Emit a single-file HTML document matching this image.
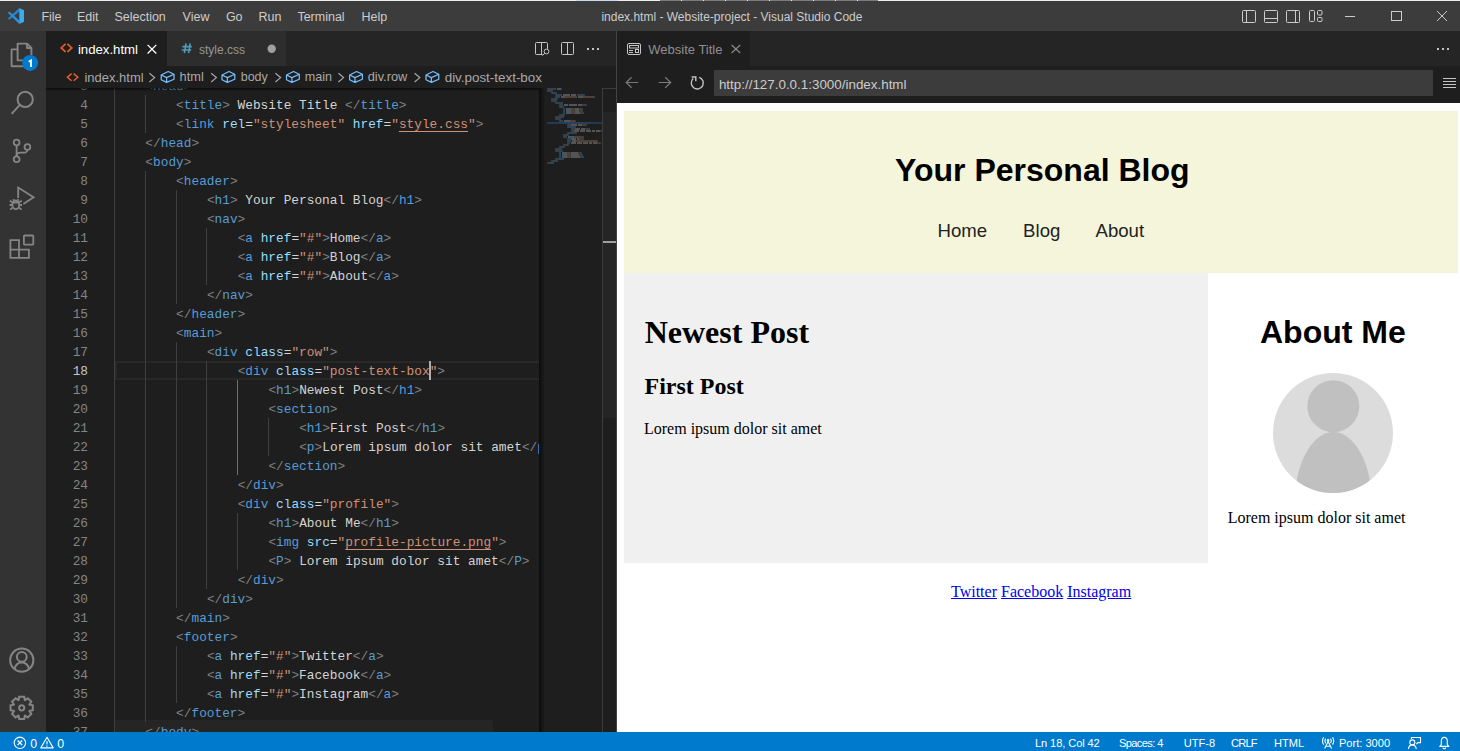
<!DOCTYPE html>
<html><head><meta charset="utf-8">
<style>
*{margin:0;padding:0;box-sizing:border-box}
html,body{width:1460px;height:751px;overflow:hidden;background:#1e1e1e}
body{position:relative;font-family:"Liberation Sans",sans-serif;color:#ccc}
.abs{position:absolute}
.t{position:absolute;white-space:pre;line-height:1}
#topline{left:0;top:0;width:1460px;height:1px;background:#eeeeee}
#title{left:0;top:1px;width:1460px;height:30px;background:#3c3c3c}
#act{left:0;top:31px;width:46px;height:701px;background:#333333}
#tabs1{left:46px;top:31px;width:570px;height:35px;background:#252526}
#tab1{left:46px;top:31px;width:121px;height:35px;background:#1e1e1e}
#tab2{left:167px;top:31px;width:119px;height:35px;background:#2d2d2d}
#bc{left:46px;top:66px;width:570px;height:22px;background:#1e1e1e}
#ed{left:46px;top:88px;width:570px;height:644px;background:#1e1e1e;overflow:hidden}
#bcshadow{left:46px;top:88px;width:493px;height:3px;background:linear-gradient(#0009,#0000)}
.ln{position:absolute;height:19px;line-height:19px;white-space:pre;font-family:"Liberation Mono",monospace;font-size:12.8px;color:#d4d4d4}
.num{position:absolute;left:0;width:42px;text-align:right;height:19px;line-height:19px;font-family:"Liberation Mono",monospace;font-size:12.8px;color:#858585}
.num.act{color:#c6c6c6}
.g{position:absolute;width:1px;height:19px;background:#404040}
.g.ga{background:#707070}
.b{color:#808080}.n{color:#569cd6}.a{color:#9cdcfe}.s{color:#ce9178}.u{color:#ce9178;text-decoration:underline;text-underline-offset:3px;text-decoration-skip-ink:none}.x{color:#d4d4d4}
#codeclip{position:absolute;left:0;top:0;width:493px;height:644px;overflow:hidden}
#curline{position:absolute;left:69px;top:273px;width:430px;height:19px;border:2px solid #282828}
#cursor{position:absolute;left:383px;top:273px;width:2px;height:19px;background:#aeafad}
#hscroll{position:absolute;left:69px;top:632px;width:378px;height:12px;background:#252525}
#minishadow{position:absolute;left:493px;top:0;width:6px;height:644px;background:linear-gradient(90deg,#0009,#0000)}
#vsb{position:absolute;left:556px;top:0;width:15px;height:644px;border-left:1px solid #3c3c3c;border-top:1px solid #3c3c3c}
#vslider{position:absolute;left:557px;top:24px;width:13px;height:306px;background:#252525}
#vcur{position:absolute;left:557px;top:153px;width:13px;height:2px;background:#a0a0a0}
#sep{left:616px;top:31px;width:1px;height:701px;background:#444}
#r2tabs{left:617px;top:31px;width:843px;height:35px;background:#252526}
#r2tab{left:617px;top:31px;width:133px;height:35px;background:#1e1e1e}
#r2bar{left:617px;top:66px;width:843px;height:37px;background:#1e1e1e}
#url{left:714px;top:70px;width:719px;height:26px;background:#3c3c3c}
#web{left:617px;top:103px;width:843px;height:629px;background:#fff;overflow:hidden}
#hdr{left:624px;top:111px;width:834px;height:162px;background:#f5f5dc}
#post{left:624px;top:273px;width:584px;height:290px;background:#f0f0f0}
#status{left:0;top:732px;width:1460px;height:19px;background:#007acc}
.st{font-size:11.1px;color:#fff}
.ser{font-family:"Liberation Serif",serif;color:#000}
</style></head><body>
<div id="topline" class="abs"></div>
<div class="abs" style="left:576px;top:0;width:42px;height:1px;background:#c6d9ee"></div>
<div class="abs" style="left:660px;top:0;width:21px;height:1px;background:#7c7c7c"></div>
<div class="abs" style="left:682px;top:0;width:21px;height:1px;background:#7c7c7c"></div>
<div class="abs" style="left:704px;top:0;width:21px;height:1px;background:#7c7c7c"></div>
<div class="abs" style="left:726px;top:0;width:21px;height:1px;background:#7c7c7c"></div>
<div class="abs" style="left:748px;top:0;width:21px;height:1px;background:#7c7c7c"></div>
<div class="abs" style="left:770px;top:0;width:21px;height:1px;background:#7c7c7c"></div>
<div class="abs" style="left:792px;top:0;width:21px;height:1px;background:#7c7c7c"></div>
<div class="abs" style="left:814px;top:0;width:21px;height:1px;background:#7c7c7c"></div>
<div class="abs" style="left:836px;top:0;width:21px;height:1px;background:#7c7c7c"></div>
<div class="abs" style="left:858px;top:0;width:20px;height:1px;background:#7c7c7c"></div>
<div id="title" class="abs"></div>
<div id="act" class="abs"></div>
<div id="tabs1" class="abs"></div>
<div id="tab1" class="abs"></div>
<div id="tab2" class="abs"></div>
<div id="bc" class="abs"></div>
<div id="ed" class="abs">
<div class="num" style="top:-11.5px">3</div>
<div class="num" style="top:7.5px">4</div>
<div class="num" style="top:26.5px">5</div>
<div class="num" style="top:45.5px">6</div>
<div class="num" style="top:64.5px">7</div>
<div class="num" style="top:83.5px">8</div>
<div class="num" style="top:102.5px">9</div>
<div class="num" style="top:121.5px">10</div>
<div class="num" style="top:140.5px">11</div>
<div class="num" style="top:159.5px">12</div>
<div class="num" style="top:178.5px">13</div>
<div class="num" style="top:197.5px">14</div>
<div class="num" style="top:216.5px">15</div>
<div class="num" style="top:235.5px">16</div>
<div class="num" style="top:254.5px">17</div>
<div class="num act" style="top:273.5px">18</div>
<div class="num" style="top:292.5px">19</div>
<div class="num" style="top:311.5px">20</div>
<div class="num" style="top:330.5px">21</div>
<div class="num" style="top:349.5px">22</div>
<div class="num" style="top:368.5px">23</div>
<div class="num" style="top:387.5px">24</div>
<div class="num" style="top:406.5px">25</div>
<div class="num" style="top:425.5px">26</div>
<div class="num" style="top:444.5px">27</div>
<div class="num" style="top:463.5px">28</div>
<div class="num" style="top:482.5px">29</div>
<div class="num" style="top:501.5px">30</div>
<div class="num" style="top:520.5px">31</div>
<div class="num" style="top:539.5px">32</div>
<div class="num" style="top:558.5px">33</div>
<div class="num" style="top:577.5px">34</div>
<div class="num" style="top:596.5px">35</div>
<div class="num" style="top:615.5px">36</div>
<div class="num" style="top:634.5px">37</div>
<div id="codeclip">
<div id="hscroll"></div>
<div id="curline"></div>
<div class="g" style="top:-12px;left:68px"></div>
<div class="g" style="top:7px;left:68px"></div>
<div class="g" style="top:7px;left:99px"></div>
<div class="g" style="top:26px;left:68px"></div>
<div class="g" style="top:26px;left:99px"></div>
<div class="g" style="top:45px;left:68px"></div>
<div class="g" style="top:64px;left:68px"></div>
<div class="g" style="top:83px;left:68px"></div>
<div class="g" style="top:83px;left:99px"></div>
<div class="g" style="top:102px;left:68px"></div>
<div class="g" style="top:102px;left:99px"></div>
<div class="g" style="top:102px;left:130px"></div>
<div class="g" style="top:121px;left:68px"></div>
<div class="g" style="top:121px;left:99px"></div>
<div class="g" style="top:121px;left:130px"></div>
<div class="g" style="top:140px;left:68px"></div>
<div class="g" style="top:140px;left:99px"></div>
<div class="g" style="top:140px;left:130px"></div>
<div class="g" style="top:140px;left:160px"></div>
<div class="g" style="top:159px;left:68px"></div>
<div class="g" style="top:159px;left:99px"></div>
<div class="g" style="top:159px;left:130px"></div>
<div class="g" style="top:159px;left:160px"></div>
<div class="g" style="top:178px;left:68px"></div>
<div class="g" style="top:178px;left:99px"></div>
<div class="g" style="top:178px;left:130px"></div>
<div class="g" style="top:178px;left:160px"></div>
<div class="g" style="top:197px;left:68px"></div>
<div class="g" style="top:197px;left:99px"></div>
<div class="g" style="top:197px;left:130px"></div>
<div class="g" style="top:216px;left:68px"></div>
<div class="g" style="top:216px;left:99px"></div>
<div class="g" style="top:235px;left:68px"></div>
<div class="g" style="top:235px;left:99px"></div>
<div class="g" style="top:254px;left:68px"></div>
<div class="g" style="top:254px;left:99px"></div>
<div class="g" style="top:254px;left:130px"></div>
<div class="g" style="top:273px;left:68px"></div>
<div class="g" style="top:273px;left:99px"></div>
<div class="g" style="top:273px;left:130px"></div>
<div class="g" style="top:273px;left:160px"></div>
<div class="g" style="top:292px;left:68px"></div>
<div class="g" style="top:292px;left:99px"></div>
<div class="g" style="top:292px;left:130px"></div>
<div class="g" style="top:292px;left:160px"></div>
<div class="g ga" style="top:292px;left:191px"></div>
<div class="g" style="top:311px;left:68px"></div>
<div class="g" style="top:311px;left:99px"></div>
<div class="g" style="top:311px;left:130px"></div>
<div class="g" style="top:311px;left:160px"></div>
<div class="g ga" style="top:311px;left:191px"></div>
<div class="g" style="top:330px;left:68px"></div>
<div class="g" style="top:330px;left:99px"></div>
<div class="g" style="top:330px;left:130px"></div>
<div class="g" style="top:330px;left:160px"></div>
<div class="g ga" style="top:330px;left:191px"></div>
<div class="g" style="top:330px;left:222px"></div>
<div class="g" style="top:349px;left:68px"></div>
<div class="g" style="top:349px;left:99px"></div>
<div class="g" style="top:349px;left:130px"></div>
<div class="g" style="top:349px;left:160px"></div>
<div class="g ga" style="top:349px;left:191px"></div>
<div class="g" style="top:349px;left:222px"></div>
<div class="g" style="top:368px;left:68px"></div>
<div class="g" style="top:368px;left:99px"></div>
<div class="g" style="top:368px;left:130px"></div>
<div class="g" style="top:368px;left:160px"></div>
<div class="g ga" style="top:368px;left:191px"></div>
<div class="g" style="top:387px;left:68px"></div>
<div class="g" style="top:387px;left:99px"></div>
<div class="g" style="top:387px;left:130px"></div>
<div class="g" style="top:387px;left:160px"></div>
<div class="g" style="top:406px;left:68px"></div>
<div class="g" style="top:406px;left:99px"></div>
<div class="g" style="top:406px;left:130px"></div>
<div class="g" style="top:406px;left:160px"></div>
<div class="g" style="top:425px;left:68px"></div>
<div class="g" style="top:425px;left:99px"></div>
<div class="g" style="top:425px;left:130px"></div>
<div class="g" style="top:425px;left:160px"></div>
<div class="g" style="top:425px;left:191px"></div>
<div class="g" style="top:444px;left:68px"></div>
<div class="g" style="top:444px;left:99px"></div>
<div class="g" style="top:444px;left:130px"></div>
<div class="g" style="top:444px;left:160px"></div>
<div class="g" style="top:444px;left:191px"></div>
<div class="g" style="top:463px;left:68px"></div>
<div class="g" style="top:463px;left:99px"></div>
<div class="g" style="top:463px;left:130px"></div>
<div class="g" style="top:463px;left:160px"></div>
<div class="g" style="top:463px;left:191px"></div>
<div class="g" style="top:482px;left:68px"></div>
<div class="g" style="top:482px;left:99px"></div>
<div class="g" style="top:482px;left:130px"></div>
<div class="g" style="top:482px;left:160px"></div>
<div class="g" style="top:501px;left:68px"></div>
<div class="g" style="top:501px;left:99px"></div>
<div class="g" style="top:501px;left:130px"></div>
<div class="g" style="top:520px;left:68px"></div>
<div class="g" style="top:520px;left:99px"></div>
<div class="g" style="top:539px;left:68px"></div>
<div class="g" style="top:539px;left:99px"></div>
<div class="g" style="top:558px;left:68px"></div>
<div class="g" style="top:558px;left:99px"></div>
<div class="g" style="top:558px;left:130px"></div>
<div class="g" style="top:577px;left:68px"></div>
<div class="g" style="top:577px;left:99px"></div>
<div class="g" style="top:577px;left:130px"></div>
<div class="g" style="top:596px;left:68px"></div>
<div class="g" style="top:596px;left:99px"></div>
<div class="g" style="top:596px;left:130px"></div>
<div class="g" style="top:615px;left:68px"></div>
<div class="g" style="top:615px;left:99px"></div>
<div class="g" style="top:634px;left:68px"></div>
<div class="ln" style="top:-11.5px;left:99.36px"><span class="b">&lt;</span><span class="n">head</span><span class="b">&gt;</span></div>
<div class="ln" style="top:7.5px;left:130.12px"><span class="b">&lt;</span><span class="n">title</span><span class="b">&gt;</span><span class="x"> Website Title </span><span class="b">&lt;/</span><span class="n">title</span><span class="b">&gt;</span></div>
<div class="ln" style="top:26.5px;left:130.12px"><span class="b">&lt;</span><span class="n">link</span><span class="x"> </span><span class="a">rel</span><span class="x">=</span><span class="s">&quot;stylesheet&quot;</span><span class="x"> </span><span class="a">href</span><span class="x">=</span><span class="s">&quot;</span><span class="u">style.css</span><span class="s">&quot;</span><span class="b">&gt;</span></div>
<div class="ln" style="top:45.5px;left:99.36px"><span class="b">&lt;/</span><span class="n">head</span><span class="b">&gt;</span></div>
<div class="ln" style="top:64.5px;left:99.36px"><span class="b">&lt;</span><span class="n">body</span><span class="b">&gt;</span></div>
<div class="ln" style="top:83.5px;left:130.12px"><span class="b">&lt;</span><span class="n">header</span><span class="b">&gt;</span></div>
<div class="ln" style="top:102.5px;left:160.88px"><span class="b">&lt;</span><span class="n">h1</span><span class="b">&gt;</span><span class="x"> Your Personal Blog</span><span class="b">&lt;/</span><span class="n">h1</span><span class="b">&gt;</span></div>
<div class="ln" style="top:121.5px;left:160.88px"><span class="b">&lt;</span><span class="n">nav</span><span class="b">&gt;</span></div>
<div class="ln" style="top:140.5px;left:191.64px"><span class="b">&lt;</span><span class="n">a</span><span class="x"> </span><span class="a">href</span><span class="x">=</span><span class="s">&quot;#&quot;</span><span class="b">&gt;</span><span class="x">Home</span><span class="b">&lt;/</span><span class="n">a</span><span class="b">&gt;</span></div>
<div class="ln" style="top:159.5px;left:191.64px"><span class="b">&lt;</span><span class="n">a</span><span class="x"> </span><span class="a">href</span><span class="x">=</span><span class="s">&quot;#&quot;</span><span class="b">&gt;</span><span class="x">Blog</span><span class="b">&lt;/</span><span class="n">a</span><span class="b">&gt;</span></div>
<div class="ln" style="top:178.5px;left:191.64px"><span class="b">&lt;</span><span class="n">a</span><span class="x"> </span><span class="a">href</span><span class="x">=</span><span class="s">&quot;#&quot;</span><span class="b">&gt;</span><span class="x">About</span><span class="b">&lt;/</span><span class="n">a</span><span class="b">&gt;</span></div>
<div class="ln" style="top:197.5px;left:160.88px"><span class="b">&lt;/</span><span class="n">nav</span><span class="b">&gt;</span></div>
<div class="ln" style="top:216.5px;left:130.12px"><span class="b">&lt;/</span><span class="n">header</span><span class="b">&gt;</span></div>
<div class="ln" style="top:235.5px;left:130.12px"><span class="b">&lt;</span><span class="n">main</span><span class="b">&gt;</span></div>
<div class="ln" style="top:254.5px;left:160.88px"><span class="b">&lt;</span><span class="n">div</span><span class="x"> </span><span class="a">class</span><span class="x">=</span><span class="s">&quot;row&quot;</span><span class="b">&gt;</span></div>
<div class="ln" style="top:273.5px;left:191.64px"><span class="b">&lt;</span><span class="n">div</span><span class="x"> </span><span class="a">class</span><span class="x">=</span><span class="s">&quot;post-text-box&quot;</span><span class="b">&gt;</span></div>
<div class="ln" style="top:292.5px;left:222.40px"><span class="b">&lt;</span><span class="n">h1</span><span class="b">&gt;</span><span class="x">Newest Post</span><span class="b">&lt;/</span><span class="n">h1</span><span class="b">&gt;</span></div>
<div class="ln" style="top:311.5px;left:222.40px"><span class="b">&lt;</span><span class="n">section</span><span class="b">&gt;</span></div>
<div class="ln" style="top:330.5px;left:253.16px"><span class="b">&lt;</span><span class="n">h1</span><span class="b">&gt;</span><span class="x">First Post</span><span class="b">&lt;/</span><span class="n">h1</span><span class="b">&gt;</span></div>
<div class="ln" style="top:349.5px;left:253.16px"><span class="b">&lt;</span><span class="n">p</span><span class="b">&gt;</span><span class="x">Lorem ipsum dolor sit amet</span><span class="b">&lt;/</span><span class="n">p</span><span class="b">&gt;</span></div>
<div class="ln" style="top:368.5px;left:222.40px"><span class="b">&lt;/</span><span class="n">section</span><span class="b">&gt;</span></div>
<div class="ln" style="top:387.5px;left:191.64px"><span class="b">&lt;/</span><span class="n">div</span><span class="b">&gt;</span></div>
<div class="ln" style="top:406.5px;left:191.64px"><span class="b">&lt;</span><span class="n">div</span><span class="x"> </span><span class="a">class</span><span class="x">=</span><span class="s">&quot;profile&quot;</span><span class="b">&gt;</span></div>
<div class="ln" style="top:425.5px;left:222.40px"><span class="b">&lt;</span><span class="n">h1</span><span class="b">&gt;</span><span class="x">About Me</span><span class="b">&lt;/</span><span class="n">h1</span><span class="b">&gt;</span></div>
<div class="ln" style="top:444.5px;left:222.40px"><span class="b">&lt;</span><span class="n">img</span><span class="x"> </span><span class="a">src</span><span class="x">=</span><span class="s">&quot;</span><span class="u">profile-picture.png</span><span class="s">&quot;</span><span class="b">&gt;</span></div>
<div class="ln" style="top:463.5px;left:222.40px"><span class="b">&lt;</span><span class="n">P</span><span class="b">&gt;</span><span class="x"> Lorem ipsum dolor sit amet</span><span class="b">&lt;/</span><span class="n">P</span><span class="b">&gt;</span></div>
<div class="ln" style="top:482.5px;left:191.64px"><span class="b">&lt;/</span><span class="n">div</span><span class="b">&gt;</span></div>
<div class="ln" style="top:501.5px;left:160.88px"><span class="b">&lt;/</span><span class="n">div</span><span class="b">&gt;</span></div>
<div class="ln" style="top:520.5px;left:130.12px"><span class="b">&lt;/</span><span class="n">main</span><span class="b">&gt;</span></div>
<div class="ln" style="top:539.5px;left:130.12px"><span class="b">&lt;</span><span class="n">footer</span><span class="b">&gt;</span></div>
<div class="ln" style="top:558.5px;left:160.88px"><span class="b">&lt;</span><span class="n">a</span><span class="x"> </span><span class="a">href</span><span class="x">=</span><span class="s">&quot;#&quot;</span><span class="b">&gt;</span><span class="x">Twitter</span><span class="b">&lt;/</span><span class="n">a</span><span class="b">&gt;</span></div>
<div class="ln" style="top:577.5px;left:160.88px"><span class="b">&lt;</span><span class="n">a</span><span class="x"> </span><span class="a">href</span><span class="x">=</span><span class="s">&quot;#&quot;</span><span class="b">&gt;</span><span class="x">Facebook</span><span class="b">&lt;/</span><span class="n">a</span><span class="b">&gt;</span></div>
<div class="ln" style="top:596.5px;left:160.88px"><span class="b">&lt;</span><span class="n">a</span><span class="x"> </span><span class="a">href</span><span class="x">=</span><span class="s">&quot;#&quot;</span><span class="b">&gt;</span><span class="x">Instagram</span><span class="b">&lt;/</span><span class="n">a</span><span class="b">&gt;</span></div>
<div class="ln" style="top:615.5px;left:130.12px"><span class="b">&lt;/</span><span class="n">footer</span><span class="b">&gt;</span></div>
<div class="ln" style="top:634.5px;left:99.36px"><span class="b">&lt;/</span><span class="n">body</span><span class="b">&gt;</span></div>
<div id="cursor"></div>
</div>
<div id="minishadow"></div>
<div style="position:absolute;left:501px;top:0px;width:2px;height:2px;background:#808080;opacity:.3"></div>
<div style="position:absolute;left:503px;top:0px;width:7px;height:2px;background:#569cd6;opacity:.3"></div>
<div style="position:absolute;left:511px;top:0px;width:4px;height:2px;background:#9cdcfe;opacity:.3"></div>
<div style="position:absolute;left:515px;top:0px;width:1px;height:2px;background:#808080;opacity:.3"></div>
<div style="position:absolute;left:501px;top:2px;width:1px;height:2px;background:#808080;opacity:.3"></div>
<div style="position:absolute;left:502px;top:2px;width:4px;height:2px;background:#569cd6;opacity:.3"></div>
<div style="position:absolute;left:506px;top:2px;width:1px;height:2px;background:#808080;opacity:.3"></div>
<div style="position:absolute;left:505px;top:4px;width:1px;height:2px;background:#808080;opacity:.3"></div>
<div style="position:absolute;left:506px;top:4px;width:4px;height:2px;background:#569cd6;opacity:.3"></div>
<div style="position:absolute;left:510px;top:4px;width:1px;height:2px;background:#808080;opacity:.3"></div>
<div style="position:absolute;left:509px;top:6px;width:1px;height:2px;background:#808080;opacity:.3"></div>
<div style="position:absolute;left:510px;top:6px;width:5px;height:2px;background:#569cd6;opacity:.3"></div>
<div style="position:absolute;left:515px;top:6px;width:1px;height:2px;background:#808080;opacity:.3"></div>
<div style="position:absolute;left:517px;top:6px;width:7px;height:2px;background:#d4d4d4;opacity:.3"></div>
<div style="position:absolute;left:525px;top:6px;width:5px;height:2px;background:#d4d4d4;opacity:.3"></div>
<div style="position:absolute;left:531px;top:6px;width:2px;height:2px;background:#808080;opacity:.3"></div>
<div style="position:absolute;left:533px;top:6px;width:5px;height:2px;background:#569cd6;opacity:.3"></div>
<div style="position:absolute;left:538px;top:6px;width:1px;height:2px;background:#808080;opacity:.3"></div>
<div style="position:absolute;left:509px;top:8px;width:1px;height:2px;background:#808080;opacity:.3"></div>
<div style="position:absolute;left:510px;top:8px;width:4px;height:2px;background:#569cd6;opacity:.3"></div>
<div style="position:absolute;left:515px;top:8px;width:3px;height:2px;background:#9cdcfe;opacity:.3"></div>
<div style="position:absolute;left:518px;top:8px;width:1px;height:2px;background:#d4d4d4;opacity:.3"></div>
<div style="position:absolute;left:519px;top:8px;width:12px;height:2px;background:#ce9178;opacity:.3"></div>
<div style="position:absolute;left:532px;top:8px;width:4px;height:2px;background:#9cdcfe;opacity:.3"></div>
<div style="position:absolute;left:536px;top:8px;width:1px;height:2px;background:#d4d4d4;opacity:.3"></div>
<div style="position:absolute;left:537px;top:8px;width:1px;height:2px;background:#ce9178;opacity:.3"></div>
<div style="position:absolute;left:538px;top:8px;width:9px;height:2px;background:#ce9178;opacity:.3"></div>
<div style="position:absolute;left:547px;top:8px;width:1px;height:2px;background:#ce9178;opacity:.3"></div>
<div style="position:absolute;left:548px;top:8px;width:1px;height:2px;background:#808080;opacity:.3"></div>
<div style="position:absolute;left:505px;top:10px;width:2px;height:2px;background:#808080;opacity:.3"></div>
<div style="position:absolute;left:507px;top:10px;width:4px;height:2px;background:#569cd6;opacity:.3"></div>
<div style="position:absolute;left:511px;top:10px;width:1px;height:2px;background:#808080;opacity:.3"></div>
<div style="position:absolute;left:505px;top:12px;width:1px;height:2px;background:#808080;opacity:.3"></div>
<div style="position:absolute;left:506px;top:12px;width:4px;height:2px;background:#569cd6;opacity:.3"></div>
<div style="position:absolute;left:510px;top:12px;width:1px;height:2px;background:#808080;opacity:.3"></div>
<div style="position:absolute;left:509px;top:14px;width:1px;height:2px;background:#808080;opacity:.3"></div>
<div style="position:absolute;left:510px;top:14px;width:6px;height:2px;background:#569cd6;opacity:.3"></div>
<div style="position:absolute;left:516px;top:14px;width:1px;height:2px;background:#808080;opacity:.3"></div>
<div style="position:absolute;left:513px;top:16px;width:1px;height:2px;background:#808080;opacity:.3"></div>
<div style="position:absolute;left:514px;top:16px;width:2px;height:2px;background:#569cd6;opacity:.3"></div>
<div style="position:absolute;left:516px;top:16px;width:1px;height:2px;background:#808080;opacity:.3"></div>
<div style="position:absolute;left:518px;top:16px;width:4px;height:2px;background:#d4d4d4;opacity:.3"></div>
<div style="position:absolute;left:523px;top:16px;width:8px;height:2px;background:#d4d4d4;opacity:.3"></div>
<div style="position:absolute;left:532px;top:16px;width:4px;height:2px;background:#d4d4d4;opacity:.3"></div>
<div style="position:absolute;left:536px;top:16px;width:2px;height:2px;background:#808080;opacity:.3"></div>
<div style="position:absolute;left:538px;top:16px;width:2px;height:2px;background:#569cd6;opacity:.3"></div>
<div style="position:absolute;left:540px;top:16px;width:1px;height:2px;background:#808080;opacity:.3"></div>
<div style="position:absolute;left:513px;top:18px;width:1px;height:2px;background:#808080;opacity:.3"></div>
<div style="position:absolute;left:514px;top:18px;width:3px;height:2px;background:#569cd6;opacity:.3"></div>
<div style="position:absolute;left:517px;top:18px;width:1px;height:2px;background:#808080;opacity:.3"></div>
<div style="position:absolute;left:517px;top:20px;width:1px;height:2px;background:#808080;opacity:.3"></div>
<div style="position:absolute;left:518px;top:20px;width:1px;height:2px;background:#569cd6;opacity:.3"></div>
<div style="position:absolute;left:520px;top:20px;width:4px;height:2px;background:#9cdcfe;opacity:.3"></div>
<div style="position:absolute;left:524px;top:20px;width:1px;height:2px;background:#d4d4d4;opacity:.3"></div>
<div style="position:absolute;left:525px;top:20px;width:3px;height:2px;background:#ce9178;opacity:.3"></div>
<div style="position:absolute;left:528px;top:20px;width:1px;height:2px;background:#808080;opacity:.3"></div>
<div style="position:absolute;left:529px;top:20px;width:4px;height:2px;background:#d4d4d4;opacity:.3"></div>
<div style="position:absolute;left:533px;top:20px;width:2px;height:2px;background:#808080;opacity:.3"></div>
<div style="position:absolute;left:535px;top:20px;width:1px;height:2px;background:#569cd6;opacity:.3"></div>
<div style="position:absolute;left:536px;top:20px;width:1px;height:2px;background:#808080;opacity:.3"></div>
<div style="position:absolute;left:517px;top:22px;width:1px;height:2px;background:#808080;opacity:.3"></div>
<div style="position:absolute;left:518px;top:22px;width:1px;height:2px;background:#569cd6;opacity:.3"></div>
<div style="position:absolute;left:520px;top:22px;width:4px;height:2px;background:#9cdcfe;opacity:.3"></div>
<div style="position:absolute;left:524px;top:22px;width:1px;height:2px;background:#d4d4d4;opacity:.3"></div>
<div style="position:absolute;left:525px;top:22px;width:3px;height:2px;background:#ce9178;opacity:.3"></div>
<div style="position:absolute;left:528px;top:22px;width:1px;height:2px;background:#808080;opacity:.3"></div>
<div style="position:absolute;left:529px;top:22px;width:4px;height:2px;background:#d4d4d4;opacity:.3"></div>
<div style="position:absolute;left:533px;top:22px;width:2px;height:2px;background:#808080;opacity:.3"></div>
<div style="position:absolute;left:535px;top:22px;width:1px;height:2px;background:#569cd6;opacity:.3"></div>
<div style="position:absolute;left:536px;top:22px;width:1px;height:2px;background:#808080;opacity:.3"></div>
<div style="position:absolute;left:517px;top:24px;width:1px;height:2px;background:#808080;opacity:.3"></div>
<div style="position:absolute;left:518px;top:24px;width:1px;height:2px;background:#569cd6;opacity:.3"></div>
<div style="position:absolute;left:520px;top:24px;width:4px;height:2px;background:#9cdcfe;opacity:.3"></div>
<div style="position:absolute;left:524px;top:24px;width:1px;height:2px;background:#d4d4d4;opacity:.3"></div>
<div style="position:absolute;left:525px;top:24px;width:3px;height:2px;background:#ce9178;opacity:.3"></div>
<div style="position:absolute;left:528px;top:24px;width:1px;height:2px;background:#808080;opacity:.3"></div>
<div style="position:absolute;left:529px;top:24px;width:5px;height:2px;background:#d4d4d4;opacity:.3"></div>
<div style="position:absolute;left:534px;top:24px;width:2px;height:2px;background:#808080;opacity:.3"></div>
<div style="position:absolute;left:536px;top:24px;width:1px;height:2px;background:#569cd6;opacity:.3"></div>
<div style="position:absolute;left:537px;top:24px;width:1px;height:2px;background:#808080;opacity:.3"></div>
<div style="position:absolute;left:513px;top:26px;width:2px;height:2px;background:#808080;opacity:.3"></div>
<div style="position:absolute;left:515px;top:26px;width:3px;height:2px;background:#569cd6;opacity:.3"></div>
<div style="position:absolute;left:518px;top:26px;width:1px;height:2px;background:#808080;opacity:.3"></div>
<div style="position:absolute;left:509px;top:28px;width:2px;height:2px;background:#808080;opacity:.3"></div>
<div style="position:absolute;left:511px;top:28px;width:6px;height:2px;background:#569cd6;opacity:.3"></div>
<div style="position:absolute;left:517px;top:28px;width:1px;height:2px;background:#808080;opacity:.3"></div>
<div style="position:absolute;left:509px;top:30px;width:1px;height:2px;background:#808080;opacity:.3"></div>
<div style="position:absolute;left:510px;top:30px;width:4px;height:2px;background:#569cd6;opacity:.3"></div>
<div style="position:absolute;left:514px;top:30px;width:1px;height:2px;background:#808080;opacity:.3"></div>
<div style="position:absolute;left:513px;top:32px;width:1px;height:2px;background:#808080;opacity:.3"></div>
<div style="position:absolute;left:514px;top:32px;width:3px;height:2px;background:#569cd6;opacity:.3"></div>
<div style="position:absolute;left:518px;top:32px;width:5px;height:2px;background:#9cdcfe;opacity:.3"></div>
<div style="position:absolute;left:523px;top:32px;width:1px;height:2px;background:#d4d4d4;opacity:.3"></div>
<div style="position:absolute;left:524px;top:32px;width:5px;height:2px;background:#ce9178;opacity:.3"></div>
<div style="position:absolute;left:529px;top:32px;width:1px;height:2px;background:#808080;opacity:.3"></div>
<div style="position:absolute;left:517px;top:34px;width:1px;height:2px;background:#808080;opacity:.3"></div>
<div style="position:absolute;left:518px;top:34px;width:3px;height:2px;background:#569cd6;opacity:.3"></div>
<div style="position:absolute;left:522px;top:34px;width:5px;height:2px;background:#9cdcfe;opacity:.3"></div>
<div style="position:absolute;left:527px;top:34px;width:1px;height:2px;background:#d4d4d4;opacity:.3"></div>
<div style="position:absolute;left:528px;top:34px;width:15px;height:2px;background:#ce9178;opacity:.3"></div>
<div style="position:absolute;left:543px;top:34px;width:1px;height:2px;background:#808080;opacity:.3"></div>
<div style="position:absolute;left:521px;top:36px;width:1px;height:2px;background:#808080;opacity:.3"></div>
<div style="position:absolute;left:522px;top:36px;width:2px;height:2px;background:#569cd6;opacity:.3"></div>
<div style="position:absolute;left:524px;top:36px;width:1px;height:2px;background:#808080;opacity:.3"></div>
<div style="position:absolute;left:525px;top:36px;width:6px;height:2px;background:#d4d4d4;opacity:.3"></div>
<div style="position:absolute;left:532px;top:36px;width:4px;height:2px;background:#d4d4d4;opacity:.3"></div>
<div style="position:absolute;left:536px;top:36px;width:2px;height:2px;background:#808080;opacity:.3"></div>
<div style="position:absolute;left:538px;top:36px;width:2px;height:2px;background:#569cd6;opacity:.3"></div>
<div style="position:absolute;left:540px;top:36px;width:1px;height:2px;background:#808080;opacity:.3"></div>
<div style="position:absolute;left:521px;top:38px;width:1px;height:2px;background:#808080;opacity:.3"></div>
<div style="position:absolute;left:522px;top:38px;width:7px;height:2px;background:#569cd6;opacity:.3"></div>
<div style="position:absolute;left:529px;top:38px;width:1px;height:2px;background:#808080;opacity:.3"></div>
<div style="position:absolute;left:525px;top:40px;width:1px;height:2px;background:#808080;opacity:.3"></div>
<div style="position:absolute;left:526px;top:40px;width:2px;height:2px;background:#569cd6;opacity:.3"></div>
<div style="position:absolute;left:528px;top:40px;width:1px;height:2px;background:#808080;opacity:.3"></div>
<div style="position:absolute;left:529px;top:40px;width:5px;height:2px;background:#d4d4d4;opacity:.3"></div>
<div style="position:absolute;left:535px;top:40px;width:4px;height:2px;background:#d4d4d4;opacity:.3"></div>
<div style="position:absolute;left:539px;top:40px;width:2px;height:2px;background:#808080;opacity:.3"></div>
<div style="position:absolute;left:541px;top:40px;width:2px;height:2px;background:#569cd6;opacity:.3"></div>
<div style="position:absolute;left:543px;top:40px;width:1px;height:2px;background:#808080;opacity:.3"></div>
<div style="position:absolute;left:525px;top:42px;width:1px;height:2px;background:#808080;opacity:.3"></div>
<div style="position:absolute;left:526px;top:42px;width:1px;height:2px;background:#569cd6;opacity:.3"></div>
<div style="position:absolute;left:527px;top:42px;width:1px;height:2px;background:#808080;opacity:.3"></div>
<div style="position:absolute;left:528px;top:42px;width:5px;height:2px;background:#d4d4d4;opacity:.3"></div>
<div style="position:absolute;left:534px;top:42px;width:5px;height:2px;background:#d4d4d4;opacity:.3"></div>
<div style="position:absolute;left:540px;top:42px;width:5px;height:2px;background:#d4d4d4;opacity:.3"></div>
<div style="position:absolute;left:546px;top:42px;width:3px;height:2px;background:#d4d4d4;opacity:.3"></div>
<div style="position:absolute;left:550px;top:42px;width:4px;height:2px;background:#d4d4d4;opacity:.3"></div>
<div style="position:absolute;left:554px;top:42px;width:2px;height:2px;background:#808080;opacity:.3"></div>
<div style="position:absolute;left:521px;top:44px;width:2px;height:2px;background:#808080;opacity:.3"></div>
<div style="position:absolute;left:523px;top:44px;width:7px;height:2px;background:#569cd6;opacity:.3"></div>
<div style="position:absolute;left:530px;top:44px;width:1px;height:2px;background:#808080;opacity:.3"></div>
<div style="position:absolute;left:517px;top:46px;width:2px;height:2px;background:#808080;opacity:.3"></div>
<div style="position:absolute;left:519px;top:46px;width:3px;height:2px;background:#569cd6;opacity:.3"></div>
<div style="position:absolute;left:522px;top:46px;width:1px;height:2px;background:#808080;opacity:.3"></div>
<div style="position:absolute;left:517px;top:48px;width:1px;height:2px;background:#808080;opacity:.3"></div>
<div style="position:absolute;left:518px;top:48px;width:3px;height:2px;background:#569cd6;opacity:.3"></div>
<div style="position:absolute;left:522px;top:48px;width:5px;height:2px;background:#9cdcfe;opacity:.3"></div>
<div style="position:absolute;left:527px;top:48px;width:1px;height:2px;background:#d4d4d4;opacity:.3"></div>
<div style="position:absolute;left:528px;top:48px;width:9px;height:2px;background:#ce9178;opacity:.3"></div>
<div style="position:absolute;left:537px;top:48px;width:1px;height:2px;background:#808080;opacity:.3"></div>
<div style="position:absolute;left:521px;top:50px;width:1px;height:2px;background:#808080;opacity:.3"></div>
<div style="position:absolute;left:522px;top:50px;width:2px;height:2px;background:#569cd6;opacity:.3"></div>
<div style="position:absolute;left:524px;top:50px;width:1px;height:2px;background:#808080;opacity:.3"></div>
<div style="position:absolute;left:525px;top:50px;width:5px;height:2px;background:#d4d4d4;opacity:.3"></div>
<div style="position:absolute;left:531px;top:50px;width:2px;height:2px;background:#d4d4d4;opacity:.3"></div>
<div style="position:absolute;left:533px;top:50px;width:2px;height:2px;background:#808080;opacity:.3"></div>
<div style="position:absolute;left:535px;top:50px;width:2px;height:2px;background:#569cd6;opacity:.3"></div>
<div style="position:absolute;left:537px;top:50px;width:1px;height:2px;background:#808080;opacity:.3"></div>
<div style="position:absolute;left:521px;top:52px;width:1px;height:2px;background:#808080;opacity:.3"></div>
<div style="position:absolute;left:522px;top:52px;width:3px;height:2px;background:#569cd6;opacity:.3"></div>
<div style="position:absolute;left:526px;top:52px;width:3px;height:2px;background:#9cdcfe;opacity:.3"></div>
<div style="position:absolute;left:529px;top:52px;width:1px;height:2px;background:#d4d4d4;opacity:.3"></div>
<div style="position:absolute;left:530px;top:52px;width:1px;height:2px;background:#ce9178;opacity:.3"></div>
<div style="position:absolute;left:531px;top:52px;width:19px;height:2px;background:#ce9178;opacity:.3"></div>
<div style="position:absolute;left:550px;top:52px;width:1px;height:2px;background:#ce9178;opacity:.3"></div>
<div style="position:absolute;left:551px;top:52px;width:1px;height:2px;background:#808080;opacity:.3"></div>
<div style="position:absolute;left:521px;top:54px;width:1px;height:2px;background:#808080;opacity:.3"></div>
<div style="position:absolute;left:522px;top:54px;width:1px;height:2px;background:#569cd6;opacity:.3"></div>
<div style="position:absolute;left:523px;top:54px;width:1px;height:2px;background:#808080;opacity:.3"></div>
<div style="position:absolute;left:525px;top:54px;width:5px;height:2px;background:#d4d4d4;opacity:.3"></div>
<div style="position:absolute;left:531px;top:54px;width:5px;height:2px;background:#d4d4d4;opacity:.3"></div>
<div style="position:absolute;left:537px;top:54px;width:5px;height:2px;background:#d4d4d4;opacity:.3"></div>
<div style="position:absolute;left:543px;top:54px;width:3px;height:2px;background:#d4d4d4;opacity:.3"></div>
<div style="position:absolute;left:547px;top:54px;width:4px;height:2px;background:#d4d4d4;opacity:.3"></div>
<div style="position:absolute;left:551px;top:54px;width:2px;height:2px;background:#808080;opacity:.3"></div>
<div style="position:absolute;left:553px;top:54px;width:1px;height:2px;background:#569cd6;opacity:.3"></div>
<div style="position:absolute;left:554px;top:54px;width:1px;height:2px;background:#808080;opacity:.3"></div>
<div style="position:absolute;left:517px;top:56px;width:2px;height:2px;background:#808080;opacity:.3"></div>
<div style="position:absolute;left:519px;top:56px;width:3px;height:2px;background:#569cd6;opacity:.3"></div>
<div style="position:absolute;left:522px;top:56px;width:1px;height:2px;background:#808080;opacity:.3"></div>
<div style="position:absolute;left:513px;top:58px;width:2px;height:2px;background:#808080;opacity:.3"></div>
<div style="position:absolute;left:515px;top:58px;width:3px;height:2px;background:#569cd6;opacity:.3"></div>
<div style="position:absolute;left:518px;top:58px;width:1px;height:2px;background:#808080;opacity:.3"></div>
<div style="position:absolute;left:509px;top:60px;width:2px;height:2px;background:#808080;opacity:.3"></div>
<div style="position:absolute;left:511px;top:60px;width:4px;height:2px;background:#569cd6;opacity:.3"></div>
<div style="position:absolute;left:515px;top:60px;width:1px;height:2px;background:#808080;opacity:.3"></div>
<div style="position:absolute;left:509px;top:62px;width:1px;height:2px;background:#808080;opacity:.3"></div>
<div style="position:absolute;left:510px;top:62px;width:6px;height:2px;background:#569cd6;opacity:.3"></div>
<div style="position:absolute;left:516px;top:62px;width:1px;height:2px;background:#808080;opacity:.3"></div>
<div style="position:absolute;left:513px;top:64px;width:1px;height:2px;background:#808080;opacity:.3"></div>
<div style="position:absolute;left:514px;top:64px;width:1px;height:2px;background:#569cd6;opacity:.3"></div>
<div style="position:absolute;left:516px;top:64px;width:4px;height:2px;background:#9cdcfe;opacity:.3"></div>
<div style="position:absolute;left:520px;top:64px;width:1px;height:2px;background:#d4d4d4;opacity:.3"></div>
<div style="position:absolute;left:521px;top:64px;width:3px;height:2px;background:#ce9178;opacity:.3"></div>
<div style="position:absolute;left:524px;top:64px;width:1px;height:2px;background:#808080;opacity:.3"></div>
<div style="position:absolute;left:525px;top:64px;width:7px;height:2px;background:#d4d4d4;opacity:.3"></div>
<div style="position:absolute;left:532px;top:64px;width:2px;height:2px;background:#808080;opacity:.3"></div>
<div style="position:absolute;left:534px;top:64px;width:1px;height:2px;background:#569cd6;opacity:.3"></div>
<div style="position:absolute;left:535px;top:64px;width:1px;height:2px;background:#808080;opacity:.3"></div>
<div style="position:absolute;left:513px;top:66px;width:1px;height:2px;background:#808080;opacity:.3"></div>
<div style="position:absolute;left:514px;top:66px;width:1px;height:2px;background:#569cd6;opacity:.3"></div>
<div style="position:absolute;left:516px;top:66px;width:4px;height:2px;background:#9cdcfe;opacity:.3"></div>
<div style="position:absolute;left:520px;top:66px;width:1px;height:2px;background:#d4d4d4;opacity:.3"></div>
<div style="position:absolute;left:521px;top:66px;width:3px;height:2px;background:#ce9178;opacity:.3"></div>
<div style="position:absolute;left:524px;top:66px;width:1px;height:2px;background:#808080;opacity:.3"></div>
<div style="position:absolute;left:525px;top:66px;width:8px;height:2px;background:#d4d4d4;opacity:.3"></div>
<div style="position:absolute;left:533px;top:66px;width:2px;height:2px;background:#808080;opacity:.3"></div>
<div style="position:absolute;left:535px;top:66px;width:1px;height:2px;background:#569cd6;opacity:.3"></div>
<div style="position:absolute;left:536px;top:66px;width:1px;height:2px;background:#808080;opacity:.3"></div>
<div style="position:absolute;left:513px;top:68px;width:1px;height:2px;background:#808080;opacity:.3"></div>
<div style="position:absolute;left:514px;top:68px;width:1px;height:2px;background:#569cd6;opacity:.3"></div>
<div style="position:absolute;left:516px;top:68px;width:4px;height:2px;background:#9cdcfe;opacity:.3"></div>
<div style="position:absolute;left:520px;top:68px;width:1px;height:2px;background:#d4d4d4;opacity:.3"></div>
<div style="position:absolute;left:521px;top:68px;width:3px;height:2px;background:#ce9178;opacity:.3"></div>
<div style="position:absolute;left:524px;top:68px;width:1px;height:2px;background:#808080;opacity:.3"></div>
<div style="position:absolute;left:525px;top:68px;width:9px;height:2px;background:#d4d4d4;opacity:.3"></div>
<div style="position:absolute;left:534px;top:68px;width:2px;height:2px;background:#808080;opacity:.3"></div>
<div style="position:absolute;left:536px;top:68px;width:1px;height:2px;background:#569cd6;opacity:.3"></div>
<div style="position:absolute;left:537px;top:68px;width:1px;height:2px;background:#808080;opacity:.3"></div>
<div style="position:absolute;left:509px;top:70px;width:2px;height:2px;background:#808080;opacity:.3"></div>
<div style="position:absolute;left:511px;top:70px;width:6px;height:2px;background:#569cd6;opacity:.3"></div>
<div style="position:absolute;left:517px;top:70px;width:1px;height:2px;background:#808080;opacity:.3"></div>
<div style="position:absolute;left:505px;top:72px;width:2px;height:2px;background:#808080;opacity:.3"></div>
<div style="position:absolute;left:507px;top:72px;width:4px;height:2px;background:#569cd6;opacity:.3"></div>
<div style="position:absolute;left:511px;top:72px;width:1px;height:2px;background:#808080;opacity:.3"></div>
<div style="position:absolute;left:501px;top:74px;width:2px;height:2px;background:#808080;opacity:.3"></div>
<div style="position:absolute;left:503px;top:74px;width:4px;height:2px;background:#569cd6;opacity:.3"></div>
<div style="position:absolute;left:507px;top:74px;width:1px;height:2px;background:#808080;opacity:.3"></div>
<div style="position:absolute;left:501px;top:34px;width:55px;height:2px;background:#22405f;opacity:.85"></div>
<div id="vsb"></div>
<div id="vslider"></div>
<div id="vcur"></div>
</div>
<div id="bcshadow" class="abs"></div>
<div id="sep" class="abs"></div>
<div id="r2tabs" class="abs"></div>
<div id="r2tab" class="abs"></div>
<div id="r2bar" class="abs"></div>
<div id="url" class="abs"></div>
<div id="web" class="abs"></div>
<div id="hdr" class="abs"></div>
<div id="post" class="abs"></div>
<div id="status" class="abs"></div>
<div class="t" style="left:41.40px;top:11.02px;font-size:12.5px;color:#cccccc;font-family:'Liberation Sans',sans-serif;font-weight:400;">File</div>
<div class="t" style="left:76.90px;top:11.02px;font-size:12.5px;color:#cccccc;font-family:'Liberation Sans',sans-serif;font-weight:400;">Edit</div>
<div class="t" style="left:114.40px;top:11.02px;font-size:12.5px;color:#cccccc;font-family:'Liberation Sans',sans-serif;font-weight:400;">Selection</div>
<div class="t" style="left:182.60px;top:11.02px;font-size:12.5px;color:#cccccc;font-family:'Liberation Sans',sans-serif;font-weight:400;">View</div>
<div class="t" style="left:225.90px;top:11.02px;font-size:12.5px;color:#cccccc;font-family:'Liberation Sans',sans-serif;font-weight:400;">Go</div>
<div class="t" style="left:258.60px;top:11.02px;font-size:12.5px;color:#cccccc;font-family:'Liberation Sans',sans-serif;font-weight:400;">Run</div>
<div class="t" style="left:297.40px;top:11.02px;font-size:12.5px;color:#cccccc;font-family:'Liberation Sans',sans-serif;font-weight:400;">Terminal</div>
<div class="t" style="left:361.50px;top:11.02px;font-size:12.5px;color:#cccccc;font-family:'Liberation Sans',sans-serif;font-weight:400;">Help</div>
<div class="t" style="left:601.40px;top:11.34px;font-size:12px;color:#cccccc;font-family:'Liberation Sans',sans-serif;font-weight:400;">index.html - Website-project - Visual Studio Code</div>
<div class="t" style="left:77.90px;top:42.73px;font-size:13.2px;color:#ffffff;font-family:'Liberation Sans',sans-serif;font-weight:400;">index.html</div>
<div class="t" style="left:199.00px;top:43.74px;font-size:12px;color:#969696;font-family:'Liberation Sans',sans-serif;font-weight:400;">style.css</div>
<div class="t" style="left:648.30px;top:42.80px;font-size:13px;color:#8f8f8f;font-family:'Liberation Sans',sans-serif;font-weight:400;">Website Title</div>
<div class="t" style="left:84.40px;top:71.00px;font-size:13px;color:#a9a9a9;font-family:'Liberation Sans',sans-serif;font-weight:400;">index.html</div>
<div class="t" style="left:179.60px;top:71.16px;font-size:12.8px;color:#a9a9a9;font-family:'Liberation Sans',sans-serif;font-weight:400;">html</div>
<div class="t" style="left:240.70px;top:71.42px;font-size:12.5px;color:#a9a9a9;font-family:'Liberation Sans',sans-serif;font-weight:400;">body</div>
<div class="t" style="left:304.80px;top:71.33px;font-size:12.6px;color:#a9a9a9;font-family:'Liberation Sans',sans-serif;font-weight:400;">main</div>
<div class="t" style="left:367.70px;top:71.16px;font-size:12.8px;color:#a9a9a9;font-family:'Liberation Sans',sans-serif;font-weight:400;">div.row</div>
<div class="t" style="left:444.70px;top:70.66px;font-size:13.4px;color:#a9a9a9;font-family:'Liberation Sans',sans-serif;font-weight:400;">div.post-text-box</div>
<div class="t" style="left:718.90px;top:77.56px;font-size:13.4px;color:#cccccc;font-family:'Liberation Sans',sans-serif;font-weight:400;">http://127.0.0.1:3000/index.html</div>
<div class="t" style="left:30.20px;top:737.59px;font-size:12.3px;color:#ffffff;font-family:'Liberation Sans',sans-serif;font-weight:400;">0</div>
<div class="t" style="left:57.30px;top:737.59px;font-size:12.3px;color:#ffffff;font-family:'Liberation Sans',sans-serif;font-weight:400;">0</div>
<div class="t" style="left:1035.00px;top:738.10px;font-size:11.1px;color:#ffffff;font-family:'Liberation Sans',sans-serif;font-weight:400;letter-spacing:-0.1px">Ln 18, Col 42</div>
<div class="t" style="left:1118.90px;top:738.10px;font-size:11.1px;color:#ffffff;font-family:'Liberation Sans',sans-serif;font-weight:400;letter-spacing:-0.6px">Spaces: 4</div>
<div class="t" style="left:1183.70px;top:738.10px;font-size:11.1px;color:#ffffff;font-family:'Liberation Sans',sans-serif;font-weight:400;">UTF-8</div>
<div class="t" style="left:1231.00px;top:738.10px;font-size:11.1px;color:#ffffff;font-family:'Liberation Sans',sans-serif;font-weight:400;letter-spacing:-0.8px">CRLF</div>
<div class="t" style="left:1274.00px;top:738.10px;font-size:11.1px;color:#ffffff;font-family:'Liberation Sans',sans-serif;font-weight:400;">HTML</div>
<div class="t" style="left:1338.90px;top:738.10px;font-size:11.1px;color:#ffffff;font-family:'Liberation Sans',sans-serif;font-weight:400;">Port: 3000</div>
<div class="t" style="left:895.00px;top:153.91px;font-size:32px;color:#000;font-family:'Liberation Sans',sans-serif;font-weight:700;">Your Personal Blog</div>
<div class="t" style="left:937.50px;top:222.16px;font-size:18.6px;color:#222;font-family:'Liberation Sans',sans-serif;font-weight:400;">Home</div>
<div class="t" style="left:1023.10px;top:222.16px;font-size:18.6px;color:#222;font-family:'Liberation Sans',sans-serif;font-weight:400;">Blog</div>
<div class="t" style="left:1095.50px;top:222.16px;font-size:18.6px;color:#222;font-family:'Liberation Sans',sans-serif;font-weight:400;">About</div>
<div class="t" style="left:644.70px;top:316.20px;font-size:32px;color:#000;font-family:'Liberation Serif',serif;font-weight:700;">Newest Post</div>
<div class="t" style="left:644.50px;top:373.90px;font-size:24px;color:#000;font-family:'Liberation Serif',serif;font-weight:700;">First Post</div>
<div class="t" style="left:644.00px;top:420.60px;font-size:16px;color:#000;font-family:'Liberation Serif',serif;font-weight:400;">Lorem ipsum dolor sit amet</div>
<div class="t" style="left:1260.00px;top:315.91px;font-size:32px;color:#000;font-family:'Liberation Sans',sans-serif;font-weight:700;">About Me</div>
<div class="t" style="left:1227.70px;top:509.60px;font-size:16px;color:#000;font-family:'Liberation Serif',serif;font-weight:400;">Lorem ipsum dolor sit amet</div>
<div class="t" style="left:951.00px;top:583.60px;font-size:16px;color:#0000ee;font-family:'Liberation Serif',serif;font-weight:400;"><span style="text-decoration:underline">Twitter</span> <span style="text-decoration:underline">Facebook</span> <span style="text-decoration:underline">Instagram</span></div>
<svg width="1460" height="751" style="position:absolute;left:0;top:0" fill="none" stroke-linecap="butt">
<path fill="#2185cf" d="M19.3 8 L19.3 11.4 L9.4 19.8 L7.8 18.6 Z"/>
<path fill="#2593e0" d="M7.8 12.7 L9.4 11.5 L19.3 20.6 L19.3 24 Z"/>
<path fill="#3aabf3" d="M19.3 8 L24 10.2 V21.8 L19.3 24 Z"/>
<g stroke="#858585" stroke-width="1.9" stroke-linejoin="round">
<path d="M17.2 49.4 H11.6 V66.3 H23.5"/>
<path d="M23 60.4 H17.6 V43.6 H27.2 L31.4 47.8 V55"/>
<path d="M27 43.6 V48 H31.4"/>
</g>
<circle cx="30.1" cy="62.9" r="8" fill="#007acc"/>
<path d="M28.7 61.7 L31 60.3 V67" stroke="#fff" stroke-width="1.8"/>
<g stroke="#858585" stroke-width="2">
<circle cx="25.2" cy="99.4" r="7.6"/>
<path d="M19.8 104.9 L11.6 113.9"/>
</g>
<g stroke="#858585" stroke-width="1.8">
<circle cx="16.6" cy="142.5" r="2.9"/><circle cx="16.6" cy="159.3" r="2.9"/><circle cx="27.4" cy="147" r="2.9"/>
<path d="M16.6 145.4 V156.4"/>
<path d="M16.6 156 C16.6 153.5 18.5 152.7 20.5 152.7 H23.5 C25.5 152.7 27.4 151.5 27.4 149.9"/>
<path d="M18.2 198 V187.6 L33.6 197.3 L23.4 203.9"/>
<ellipse cx="15.8" cy="204.8" rx="3.4" ry="4.3"/>
<path d="M12.4 202.5 H19.2 M9.8 200.8 L12.4 202.3 M21.8 200.8 L19.2 202.3 M9.6 205 H12.4 M19.2 205 H22 M10 209.6 L12.6 207.6 M21.6 209.6 L19 207.6 M14 200.8 L13.2 199.2 M17.6 200.8 L18.4 199.2"/>
<path d="M10.4 240.2 H19 V249.6 H28.9 V257.9 H10.4 Z M19 249.6 V257.9 M10.4 249.6 H19"/>
<rect x="23.9" y="235.5" width="9.4" height="9.2" rx="0.8"/>
<g stroke-width="2">
<circle cx="21.8" cy="660.2" r="11.6"/>
<circle cx="21.8" cy="656.8" r="4.9"/>
<path d="M14.4 669.2 C15.6 664.8 18.2 662.6 21.8 662.6 C25.4 662.6 28 664.8 29.2 669.2"/>
<path d="M19.21 696.67 L24.19 696.67 L24.82 700.00 L25.01 700.08 L27.81 698.17 L31.33 701.69 L29.42 704.49 L29.50 704.68 L32.83 705.31 L32.83 710.29 L29.50 710.92 L29.42 711.11 L31.33 713.91 L27.81 717.43 L25.01 715.52 L24.82 715.60 L24.19 718.93 L19.21 718.93 L18.58 715.60 L18.39 715.52 L15.59 717.43 L12.07 713.91 L13.98 711.11 L13.90 710.92 L10.57 710.29 L10.57 705.31 L13.90 704.68 L13.98 704.49 L12.07 701.69 L15.59 698.17 L18.39 700.08 L18.58 700.00 Z"/>
<circle cx="21.7" cy="707.8" r="2.6"/>
</g>
</g>
<path d="M65.6 43.9 L61.2 47.9 L65.6 51.9 M67.4 43.9 L71.8 47.9 L67.4 51.9" stroke="#e55e2e" stroke-width="1.7"/>
<path d="M147.6 44.9 L156.3 53.5 M156.3 44.9 L147.6 53.5" stroke="#ffffff" stroke-width="1.3"/>
<path d="M186 43.4 L184.4 53 M190.2 43.4 L188.6 53 M182.4 46.6 H191.8 M181.8 50 H191.2" stroke="#519aba" stroke-width="1.6"/>
<circle cx="271.7" cy="48.8" r="4.2" fill="#a0a0a0"/>
<g stroke="#c5c5c5" stroke-width="1">
<path d="M541.5 42.5 V54.5 M547.5 48.8 V43.5 Q547.5 42.5 546.5 42.5 H536.5 Q535.5 42.5 535.5 43.5 V53.5 Q535.5 54.5 536.5 54.5 H542.5"/>
<circle cx="546.5" cy="51.5" r="2.4"/>
<path d="M544.8 53.2 L542.3 55.7"/>
<rect x="561.5" y="42.5" width="12" height="12" rx="1"/>
<path d="M567.5 42.5 V54.5"/>
</g>
<rect x="587" y="48" width="2" height="2" fill="#c5c5c5"/>
<rect x="592" y="48" width="2" height="2" fill="#c5c5c5"/>
<rect x="597" y="48" width="2" height="2" fill="#c5c5c5"/>
<path d="M71.6 73.6 L67.4 77.2 L71.6 80.8 M73.6 73.6 L77.8 77.2 L73.6 80.8" stroke="#e55e2e" stroke-width="1.5"/>
<path d="M168.20 71.50 L174.00 74.30 L174.00 79.20 L166.60 82.40 L161.20 79.80 L161.20 75.00 Z M161.20 75.00 L166.60 77.60 L174.00 74.30 M166.60 77.60 L166.60 82.40" stroke="#75beff" stroke-width="1.25" stroke-linejoin="round"/>
<path d="M229.00 71.50 L234.80 74.30 L234.80 79.20 L227.40 82.40 L222.00 79.80 L222.00 75.00 Z M222.00 75.00 L227.40 77.60 L234.80 74.30 M227.40 77.60 L227.40 82.40" stroke="#75beff" stroke-width="1.25" stroke-linejoin="round"/>
<path d="M293.50 71.50 L299.30 74.30 L299.30 79.20 L291.90 82.40 L286.50 79.80 L286.50 75.00 Z M286.50 75.00 L291.90 77.60 L299.30 74.30 M291.90 77.60 L291.90 82.40" stroke="#75beff" stroke-width="1.25" stroke-linejoin="round"/>
<path d="M356.60 71.50 L362.40 74.30 L362.40 79.20 L355.00 82.40 L349.60 79.80 L349.60 75.00 Z M349.60 75.00 L355.00 77.60 L362.40 74.30 M355.00 77.60 L355.00 82.40" stroke="#75beff" stroke-width="1.25" stroke-linejoin="round"/>
<path d="M433.00 71.50 L438.80 74.30 L438.80 79.20 L431.40 82.40 L426.00 79.80 L426.00 75.00 Z M426.00 75.00 L431.40 77.60 L438.80 74.30 M431.40 77.60 L431.40 82.40" stroke="#75beff" stroke-width="1.25" stroke-linejoin="round"/>
<path d="M149.4 73.2 L154.6 77.6 L149.4 82" stroke="#a9a9a9" stroke-width="1.2"/>
<path d="M211.2 73.2 L216.4 77.6 L211.2 82" stroke="#a9a9a9" stroke-width="1.2"/>
<path d="M275.4 73.2 L280.6 77.6 L275.4 82" stroke="#a9a9a9" stroke-width="1.2"/>
<path d="M338.4 73.2 L343.6 77.6 L338.4 82" stroke="#a9a9a9" stroke-width="1.2"/>
<path d="M414.6 73.2 L419.8 77.6 L414.6 82" stroke="#a9a9a9" stroke-width="1.2"/>
<g stroke="#c5c5c5" stroke-width="1">
<rect x="627.5" y="43.5" width="13" height="11" rx="1.5"/>
<rect x="629.5" y="45.5" width="9" height="2.5"/>
<path d="M629 50.5 H633 M629 52.5 H633"/>
<rect x="635.5" y="49.5" width="3" height="3"/>
</g>
<path d="M731.6 45 L740.2 53 M740.2 45 L731.6 53" stroke="#8a8a8a" stroke-width="1.2"/>
<rect x="1437" y="48" width="2" height="2" fill="#c5c5c5"/>
<rect x="1442" y="48" width="2" height="2" fill="#c5c5c5"/>
<rect x="1447" y="48" width="2" height="2" fill="#c5c5c5"/>
<path d="M638.2 82.5 H626.4 M631.6 77.2 L626.2 82.5 L631.6 87.8" stroke="#7a7a7a" stroke-width="1.2"/>
<path d="M658.7 82.5 H670.5 M665.2 77.2 L670.7 82.5 L665.2 87.8" stroke="#7a7a7a" stroke-width="1.2"/>
<path d="M693.2 78.6 A6 6 0 1 0 699.2 77.3" stroke="#c5c5c5" stroke-width="1.4"/>
<path d="M691.6 77 H695.8 V81.2" stroke="#c5c5c5" stroke-width="1.4"/>
<path d="M1443 78.5 H1456 M1443 81.5 H1456 M1443 84.5 H1456 M1443 87.5 H1456" stroke="#c5c5c5" stroke-width="1"/>
<g stroke="#cccccc" stroke-width="1">
<rect x="1242.5" y="10.5" width="13" height="12" rx="1"/><path d="M1246.5 10.5 V22.5"/>
<rect x="1264.5" y="10.5" width="13" height="12" rx="1"/><path d="M1264.5 18.5 H1277.5"/>
<rect x="1286.5" y="10.5" width="13" height="12" rx="1"/><path d="M1295.5 10.5 V22.5"/>
<rect x="1309.5" y="10.5" width="5" height="11" rx="1"/><rect x="1317.5" y="10.5" width="4.5" height="4.5" rx="1"/><rect x="1317.5" y="17.5" width="4.5" height="4" rx="1"/>
<path d="M1345 16.5 H1355"/>
<rect x="1391.5" y="11.5" width="10" height="9"/>
<path d="M1437 11 L1447 21 M1447 11 L1437 21"/>
</g>
<g stroke="#ffffff" stroke-width="1.1">
<circle cx="19.9" cy="742.8" r="5.7"/>
<path d="M17.6 740.5 L22.2 745.1 M22.2 740.5 L17.6 745.1" stroke-width="1.3"/>
<path d="M47 737.3 L53.2 747.9 H40.8 Z" stroke-linejoin="round"/>
<path d="M47 741 V744.6 M47 745.6 V746.8"/>
<path d="M1323.6 737.2 Q1321.4 740.9 1323.6 744.6 M1325.6 738.6 Q1324.2 740.9 1325.6 743.2 M1332.6 737.2 Q1334.8 740.9 1332.6 744.6 M1330.6 738.6 Q1332 740.9 1330.6 743.2"/>
<circle cx="1328.1" cy="740.4" r="1.3" fill="#fff" stroke="none"/>
<path d="M1328.1 741.6 L1324.6 748.6 M1328.1 741.6 L1331.6 748.6 M1325.8 746.3 H1330.4"/>
<circle cx="1412.3" cy="742.4" r="2.5"/>
<path d="M1408.4 749 C1408.8 746.2 1410.3 744.9 1412.3 744.9 C1414.3 744.9 1415.8 746.2 1416.3 749"/>
<path d="M1411.4 739 V737.5 H1420.5 V742.6 H1417.9 L1416.3 744.2"/>
<path d="M1439.8 746.4 L1441.3 744.6 V741.4 C1441.3 738.8 1442.6 737.4 1444.3 737.4 C1446 737.4 1447.3 738.8 1447.3 741.4 V744.6 L1448.8 746.4 Z" stroke-linejoin="round"/>
<path d="M1443 747.4 A1.3 1.3 0 0 0 1445.6 747.4"/>
</g>
<clipPath id="pc"><circle cx="1333" cy="433" r="60"/></clipPath>
<circle cx="1333" cy="433" r="60" fill="#dcdcdc"/>
<g clip-path="url(#pc)" fill="#c0c0c0"><circle cx="1333.3" cy="406.2" r="26"/><ellipse cx="1333.3" cy="503" rx="38.6" ry="71"/></g>
</svg>
</body></html>
